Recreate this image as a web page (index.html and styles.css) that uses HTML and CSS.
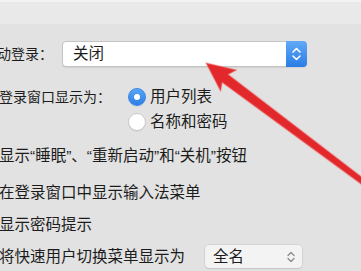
FILE: index.html
```html
<!DOCTYPE html>
<html lang="zh-CN">
<head>
<meta charset="utf-8">
<link rel="stylesheet" href="styles.css">
</head>
<body>
<div class="window">
  <div class="toolbar"></div>
  <div class="content">
    <div class="row row-auto">
      <span class="label label-auto">动登录：</span>
      <div class="popup popup-main">
        <span class="popup-text">关闭</span>
        <span class="stepper">
          <svg width="21" height="26" viewBox="0 0 21 26">
            <path d="M7 11 L10.5 7.5 L14 11" fill="none" stroke="#fff" stroke-width="1.6" stroke-linecap="round" stroke-linejoin="round"/>
            <path d="M7 15 L10.5 18.5 L14 15" fill="none" stroke="#fff" stroke-width="1.6" stroke-linecap="round" stroke-linejoin="round"/>
          </svg>
        </span>
      </div>
    </div>
    <div class="row row-radio">
      <span class="label label-display">登录窗口显示为：</span>
      <span class="radio on"></span>
      <span class="opt">用户列表</span>
    </div>
    <div class="row row-radio row-radio2">
      <span class="radio"></span>
      <span class="opt">名称和密码</span>
    </div>
    <div class="row row-check row4">显示“睡眠”、“重新启动”和“关机”按钮</div>
    <div class="row row-check row5">在登录窗口中显示输入法菜单</div>
    <div class="row row-check row6">显示密码提示</div>
    <div class="row row-check row7">
      <span>将快速用户切换菜单显示为</span>
      <div class="popup popup-name">
        <span class="popup-text">全名</span>
        <svg class="chev" width="10" height="14" viewBox="0 0 10 14">
          <path d="M2 5.5 L5 2.5 L8 5.5" fill="none" stroke="#8a8a8a" stroke-width="1.3" stroke-linecap="round" stroke-linejoin="round"/>
          <path d="M2 8.5 L5 11.5 L8 8.5" fill="none" stroke="#8a8a8a" stroke-width="1.3" stroke-linecap="round" stroke-linejoin="round"/>
        </svg>
      </div>
    </div>
  </div>
  <svg class="arrow" width="361" height="271" viewBox="0 0 361 271">
    <polygon points="206,63 236.5,70 228.2,74.4 399.5,206 396.5,210 222.2,82.4 220.6,91.2" fill="#e3282b" stroke="rgba(240,110,110,0.45)" stroke-width="1.5" stroke-linejoin="round"/>
  </svg>
</div>
</body>
</html>
```

FILE: styles.css
```css
html, body {
  margin: 0;
  padding: 0;
  width: 361px;
  height: 271px;
  overflow: hidden;
  background: #e2e2e2;
}

.window {
  position: relative;
  width: 361px;
  height: 271px;
  overflow: hidden;
  font-family: "Liberation Sans", "Noto Sans CJK SC", sans-serif;
  color: #1c1c1c;
  background: #e2e2e2;
}

.toolbar {
  height: 22px;
  background: #e9e9e9;
  border-top: 2px solid #f3f3f3;
}

.content {
  padding-top: 17px;
  display: flex;
  flex-direction: column;
}

.row {
  display: flex;
  align-items: center;
  line-height: 1;
  white-space: nowrap;
}

.row-auto {
  height: 26px;
}

.label {
  font-size: 14px;
  flex: none;
}

.label-auto {
  margin-left: -3px;
  width: 65px;
}

.label-display {
  margin-left: -1px;
  width: 129px;
}

.popup {
  display: flex;
  align-items: center;
  box-sizing: border-box;
}

.popup-main {
  width: 245px;
  height: 26px;
  background: #fff;
  border: 1px solid #c4c4c4;
  border-radius: 4px;
  box-shadow: 0 1px 1px rgba(0,0,0,0.08);
  position: relative;
}

.popup-text {
  font-size: 15.5px;
  padding-left: 10px;
  flex: 1;
}

.stepper {
  width: 21px;
  height: 26px;
  margin: -1px -1px -1px 0;
  border-radius: 0 4px 4px 0;
  background: linear-gradient(#62aaf8, #2a7ce6);
  display: flex;
}

.row-radio {
  height: 25px;
  margin-top: 17px;
}

.row-radio2 {
  margin-top: 0;
  height: 26px;
  padding-left: 128px;
}

.radio {
  flex: none;
  box-sizing: border-box;
  width: 18px;
  height: 18px;
  border-radius: 50%;
  background: #fff;
  border: 1px solid #c9c9c9;
  box-shadow: 0 1px 1px rgba(0,0,0,0.06);
  margin-right: 4px;
  position: relative;
}

.radio.on {
  background: linear-gradient(#5aa5f6, #2d7fe6);
  border-color: #3a86e8;
}

.radio.on::after {
  content: "";
  position: absolute;
  left: 5px;
  top: 5px;
  width: 6px;
  height: 6px;
  border-radius: 50%;
  background: #fff;
}

.opt {
  font-size: 15.5px;
}

.row-check {
  font-size: 15.5px;
  height: 24px;
  margin-left: -1px;
}

.row4 { margin-top: 9px; }
.row5 { margin-top: 13px; }
.row6 { margin-top: 8px; }
.row7 { margin-top: 8px; height: 23px; }

.popup-name {
  margin-left: 20px;
  width: 97px;
  height: 23px;
  background: #f3f3f3;
  border-radius: 4px;
  box-shadow: 0 0 0 0.5px rgba(0,0,0,0.12), 0 1px 1px rgba(0,0,0,0.08);
}

.popup-name .popup-text {
  padding-left: 8px;
}

.chev {
  margin-right: 6px;
}

.arrow {
  position: absolute;
  left: 0;
  top: 0;
  pointer-events: none;
}
```
